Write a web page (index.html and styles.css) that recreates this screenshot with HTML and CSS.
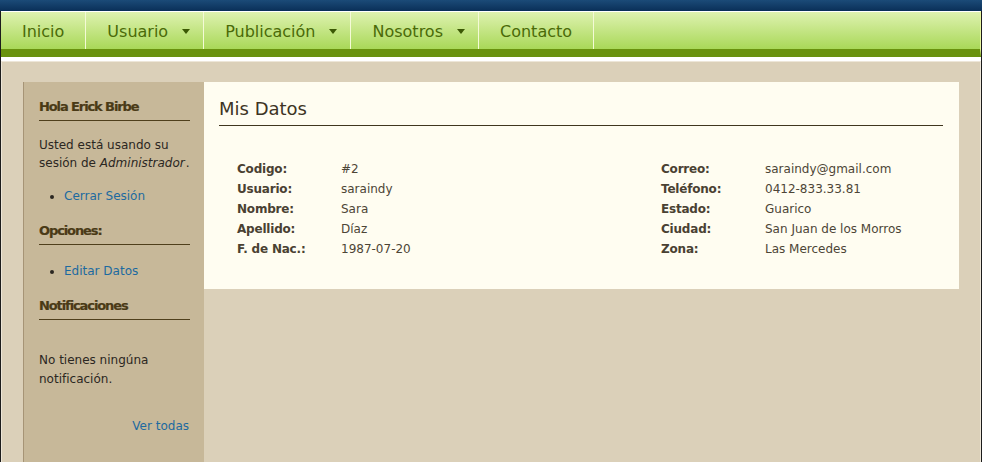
FILE: index.html
```html
<!DOCTYPE html>
<html lang="es">
<head>
<meta charset="utf-8">
<title>Mis Datos</title>
<link rel="stylesheet" href="styles.css">
</head>
<body>
<div class="topbar"></div>
<div class="page">
  <nav class="nav">
    <ul class="menu">
      <li class="item">Inicio</li>
      <li class="item has-sub">Usuario<span class="arrow"></span></li>
      <li class="item has-sub">Publicación<span class="arrow"></span></li>
      <li class="item has-sub">Nosotros<span class="arrow"></span></li>
      <li class="item">Contacto</li>
    </ul>
  </nav>
  <div class="gap"></div>
  <main class="main">
    <aside class="sidebar">
      <h3 class="side-title first">Hola Erick Birbe</h3>
      <p class="side-text">Usted está usando su sesión de <em class="role">Administrador</em>.</p>
      <ul class="side-list">
        <li><a class="link" href="#">Cerrar Sesión</a></li>
      </ul>
      <h3 class="side-title">Opciones:</h3>
      <ul class="side-list">
        <li><a class="link" href="#">Editar Datos</a></li>
      </ul>
      <h3 class="side-title">Notificaciones</h3>
      <p class="side-text notif">No tienes ningúna notificación.</p>
      <p class="side-more"><a class="link" href="#">Ver todas</a></p>
    </aside>
    <section class="panel">
      <h2 class="panel-title">Mis Datos</h2>
      <div class="data">
        <span class="lbl">Codigo:</span><span class="val">#2</span>
        <span class="lbl">Correo:</span><span class="val">saraindy@gmail.com</span>
        <span class="lbl">Usuario:</span><span class="val">saraindy</span>
        <span class="lbl">Teléfono:</span><span class="val">0412-833.33.81</span>
        <span class="lbl">Nombre:</span><span class="val">Sara</span>
        <span class="lbl">Estado:</span><span class="val">Guarico</span>
        <span class="lbl">Apellido:</span><span class="val">Díaz</span>
        <span class="lbl">Ciudad:</span><span class="val">San Juan de los Morros</span>
        <span class="lbl">F. de Nac.:</span><span class="val">1987-07-20</span>
        <span class="lbl">Zona:</span><span class="val">Las Mercedes</span>
      </div>
    </section>
  </main>
</div>
</body>
</html>
```

FILE: styles.css
```css
* { box-sizing: border-box; }

html, body {
  margin: 0;
  padding: 0;
  height: 100%;
}

body {
  background: #1c1c1c;
  font-family: "DejaVu Sans", Verdana, sans-serif;
  font-size: 12px;
  color: #2b2722;
  overflow: hidden;
}

.topbar {
  height: 11px;
  background: linear-gradient(#1b4b78, #0a2f58);
}

.page {
  margin: 0 1px;
  background: #ffffff;
  min-height: 451px;
  display: flex;
  flex-direction: column;
}

.nav {
  border-top: 1px solid #ffffff;
  border-right: 1px solid #e8f6a0;
  background: linear-gradient(#def2b0, #a9d858);
  border-bottom: 8px solid #69920e;
}

.menu {
  list-style: none;
  margin: 0;
  padding: 0;
  display: flex;
  height: 37px;
}

.item {
  display: flex;
  align-items: center;
  padding: 2px 21px 0;
  border-right: 1px solid #f4fad6;
  font-size: 16px;
  color: #4a6a08;
  white-space: nowrap;
}

.item.has-sub {
  padding-right: 13px;
}

.arrow {
  display: inline-block;
  width: 0;
  height: 0;
  margin-left: 14px;
  border-left: 4.5px solid transparent;
  border-right: 4.5px solid transparent;
  border-top: 5px solid #3b5804;
}

.gap {
  height: 4px;
  background: #ffffff;
}

.main {
  flex: 1;
  display: flex;
  align-items: flex-start;
  background: #dbd0b9;
  border-top: 1px solid #ede6d8;
  border-left: 1px solid #ede6d8;
  border-right: 1px solid #ede6d8;
  padding: 20px 21px 0 21px;
}

.sidebar {
  width: 181px;
  flex: none;
  align-self: stretch;
  background: #c7b899;
  border-left: 1px solid #a69476;
  padding: 17px 14px 0 15px;
  margin-bottom: -2px;
}

.side-title {
  margin: 18px 0 0;
  padding-bottom: 5px;
  border-bottom: 1px solid #4f3f1c;
  font-size: 13px;
  line-height: 16px;
  font-weight: bold;
  letter-spacing: -1.1px;
  color: #4a3a16;
  -webkit-text-stroke: 0.2px #4a3a16;
}

.side-title.first {
  margin-top: 0;
}

.side-text {
  margin: 15px -4px 0 0;
  line-height: 18px;
}

.role {
  padding-right: 1px;
}

.side-text.notif {
  margin-top: 31px;
  line-height: 19px;
}

.side-list {
  margin: 15px 0 0;
  padding-left: 25px;
  line-height: 18px;
}

.side-title + .side-list {
  margin-top: 17px;
}

.side-list + .side-title {
  margin-top: 18px;
}

.side-more {
  margin: 28px 0 0;
  padding-right: 1px;
  text-align: right;
  line-height: 18px;
}

.link {
  color: #1c6aa0;
  text-decoration: none;
}

.panel {
  flex: 1;
  background: #fffdf1;
  padding: 16px 16px 30px 15px;
}

.panel-title {
  margin: 0;
  padding-bottom: 5px;
  border-bottom: 1px solid #40361f;
  font-size: 18px;
  line-height: 22px;
  font-weight: normal;
  color: #3d3424;
}

.data {
  display: grid;
  grid-template-columns: 104px 320px 104px auto;
  padding: 33px 0 0 18px;
  line-height: 20px;
}

.lbl {
  font-weight: bold;
  color: #4a4132;
  letter-spacing: -0.2px;
}

.val {
  color: #4d4536;
}
```
